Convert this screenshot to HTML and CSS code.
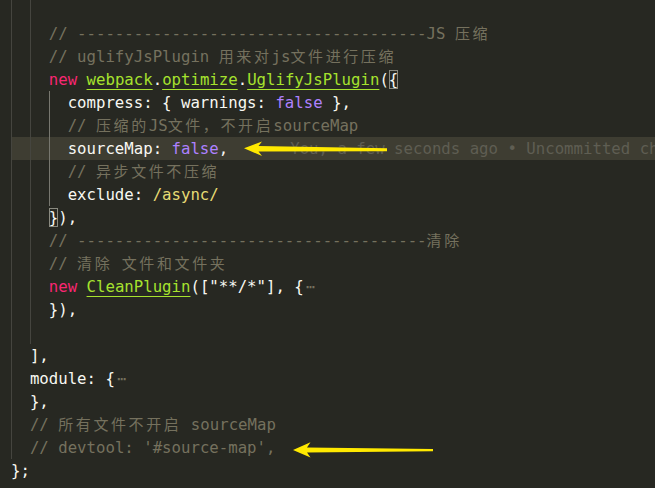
FILE: index.html
```html
<!DOCTYPE html>
<html lang="zh">
<head>
<meta charset="utf-8">
<title>webpack config</title>
<link rel="stylesheet" href="styles.css">
</head>
<body>
<div class="editor">
  <div class="code">
    <div class="ln"><i class="g"></i><i class="g"></i></div>
    <div class="ln"><i class="g"></i><i class="g"></i><span class="c">// -------------------------------------JS <span class="cjk">压缩</span></span></div>
    <div class="ln"><i class="g"></i><i class="g"></i><span class="c">// uglifyJsPlugin <span class="cjk">用来对</span>js<span class="cjk">文件进行压缩</span></span></div>
    <div class="ln"><i class="g"></i><i class="g"></i><span class="k">new</span> <span class="f">webpack</span>.<span class="f">optimize</span>.<span class="f">UglifyJsPlugin</span>(<span class="bm">{</span></div>
    <div class="ln"><i class="g"></i><i class="g"></i><i class="g on"></i>compress: { warnings: <span class="n">false</span> },</div>
    <div class="ln"><i class="g"></i><i class="g"></i><i class="g on"></i><span class="c">// <span class="cjk">压缩的</span>JS<span class="cjk">文件，不开启</span>sourceMap</span></div>
    <div class="ln cur"><i class="g"></i><i class="g"></i><i class="g on"></i>sourceMap: <span class="n">false</span>,<span class="blame">You, a few seconds ago • Uncommitted changes</span></div>
    <div class="ln"><i class="g"></i><i class="g"></i><i class="g on"></i><span class="c">// <span class="cjk">异步文件不压缩</span></span></div>
    <div class="ln"><i class="g"></i><i class="g"></i><i class="g on"></i>exclude: <span class="r">/async/</span></div>
    <div class="ln"><i class="g"></i><i class="g"></i><span class="bm">}</span>),</div>
    <div class="ln"><i class="g"></i><i class="g"></i><span class="c">// -------------------------------------<span class="cjk">清除</span></span></div>
    <div class="ln"><i class="g"></i><i class="g"></i><span class="c">// <span class="cjk">清除</span> <span class="cjk">文件和文件夹</span></span></div>
    <div class="ln"><i class="g"></i><i class="g"></i><span class="k">new</span> <span class="f">CleanPlugin</span>([<span class="s">"**/*"</span>], {<span class="fold">⋯</span></div>
    <div class="ln"><i class="g"></i><i class="g"></i>}),</div>
    <div class="ln"><i class="g"></i><i class="g"></i></div>
    <div class="ln"><i class="g"></i>],</div>
    <div class="ln"><i class="g"></i>module: {<span class="fold">⋯</span></div>
    <div class="ln"><i class="g"></i>},</div>
    <div class="ln"><i class="g"></i><span class="c">// <span class="cjk">所有文件不开启</span> sourceMap</span></div>
    <div class="ln"><i class="g"></i><span class="c">// devtool: '#source-map',</span></div>
    <div class="ln">};</div>
  </div>
  <svg class="marks" width="655" height="488" viewBox="0 0 655 488" aria-hidden="true">
    <polygon points="244,148.3 262,141.5 258.5,146 387,148.3 387,151.2 258.5,151.5 262,156" />
    <polygon points="293,450 310.5,442.3 307,447.5 433,449 433,451.2 307,452.5 310.5,457.5" />
  </svg>
</div>
</body>
</html>
```

FILE: styles.css
```css
html, body {
  margin: 0;
  padding: 0;
  background: #272822;
}

.editor {
  position: relative;
  width: 655px;
  height: 488px;
  overflow: hidden;
  background: #272822;
  color: #f8f8f2;
  font-family: "DejaVu Sans Mono", "Liberation Mono", monospace;
  font-size: 15.7px;
}

.code {
  margin-top: -1px;
  padding-left: 11px;
}

.ln {
  height: 23px;
  line-height: 23px;
  white-space: pre;
}

.ln.cur {
  background: #3e3d32;
}

.g {
  display: inline-block;
  width: 2ch;
  height: 23px;
  vertical-align: top;
  box-shadow: inset 1px 0 0 #45453f;
}

.g.on {
  box-shadow: inset 1px 0 0 #77776f;
}

.c { color: #75715e; }
.k { color: #f92672; }
.n { color: #ae81ff; }
.r { color: #e6db74; }
.s { color: #f8f8f2; }

.f {
  color: #a6e22e;
  text-decoration: underline;
  text-decoration-color: #a6e22e;
  text-decoration-thickness: 1px;
  text-underline-offset: 4px;
}

.bm {
  outline: 1px solid #8a8a80;
  outline-offset: -1px;
}

.fold {
  color: #75715e;
  margin-left: 2px;
}

.cjk {
  font-family: "Noto Sans CJK SC", sans-serif;
  font-size: 15px;
  letter-spacing: 2.6px;
  line-height: 1;
}

.blame {
  color: #5f5e53;
  margin-left: 62px;
}

.marks {
  position: absolute;
  top: 0;
  left: 0;
  fill: #ffe900;
}
```
